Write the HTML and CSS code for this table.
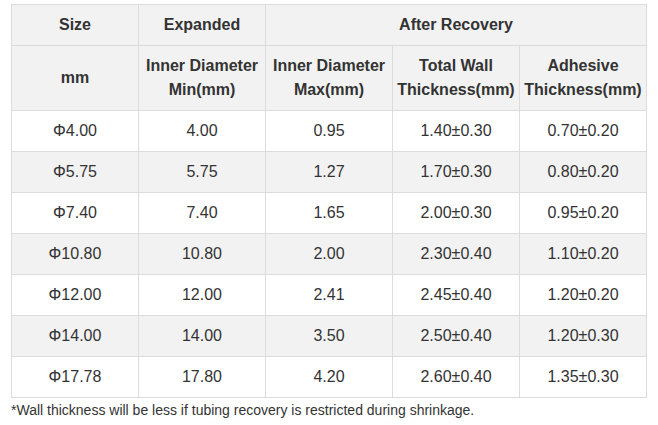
FILE: index.html
```html
<!DOCTYPE html>
<html>
<head>
<meta charset="utf-8">
<link rel="stylesheet" href="styles.css">
</head>
<body>
<div class="wrap">
<table class="spec">
  <colgroup><col><col><col><col><col></colgroup>
  <thead>
    <tr class="h1"><th>Size</th><th>Expanded</th><th colspan="3">After Recovery</th></tr>
    <tr class="h2"><th>mm</th><th>Inner Diameter<br>Min(mm)</th><th>Inner Diameter<br>Max(mm)</th><th>Total Wall<br>Thickness(mm)</th><th>Adhesive<br>Thickness(mm)</th></tr>
  </thead>
  <tbody>
    <tr><td>Φ4.00</td><td>4.00</td><td>0.95</td><td>1.40±0.30</td><td>0.70±0.20</td></tr>
    <tr class="alt"><td>Φ5.75</td><td>5.75</td><td>1.27</td><td>1.70±0.30</td><td>0.80±0.20</td></tr>
    <tr><td>Φ7.40</td><td>7.40</td><td>1.65</td><td>2.00±0.30</td><td>0.95±0.20</td></tr>
    <tr class="alt"><td>Φ10.80</td><td>10.80</td><td>2.00</td><td>2.30±0.40</td><td>1.10±0.20</td></tr>
    <tr><td>Φ12.00</td><td>12.00</td><td>2.41</td><td>2.45±0.40</td><td>1.20±0.20</td></tr>
    <tr class="alt"><td>Φ14.00</td><td>14.00</td><td>3.50</td><td>2.50±0.40</td><td>1.20±0.30</td></tr>
    <tr><td>Φ17.78</td><td>17.80</td><td>4.20</td><td>2.60±0.40</td><td>1.35±0.30</td></tr>
  </tbody>
</table>
<p class="note">*Wall thickness will be less if tubing recovery is restricted during shrinkage.</p>
</div>
</body>
</html>
```
FILE: styles.css
```css
html, body { margin: 0; padding: 0; background: #fff; }
body { font-family: "Liberation Sans", Arial, sans-serif; color: #333; }
.wrap { padding: 4px 12px 0 11px; }
.spec {
  width: 636px;
  border-collapse: collapse;
  table-layout: fixed;
  font-size: 16px;
  line-height: 24px;
}
.spec th, .spec td {
  border: 1px solid #dcdcdc;
  padding: 8px 0;
  text-align: center;
  vertical-align: middle;
}
.spec th { background: #f2f2f2; font-weight: bold; }
.spec tr.alt td { background: #f2f2f2; }
.note {
  margin: 3px 0 0 0;
  font-size: 14px;
  line-height: 18px;
}
```
